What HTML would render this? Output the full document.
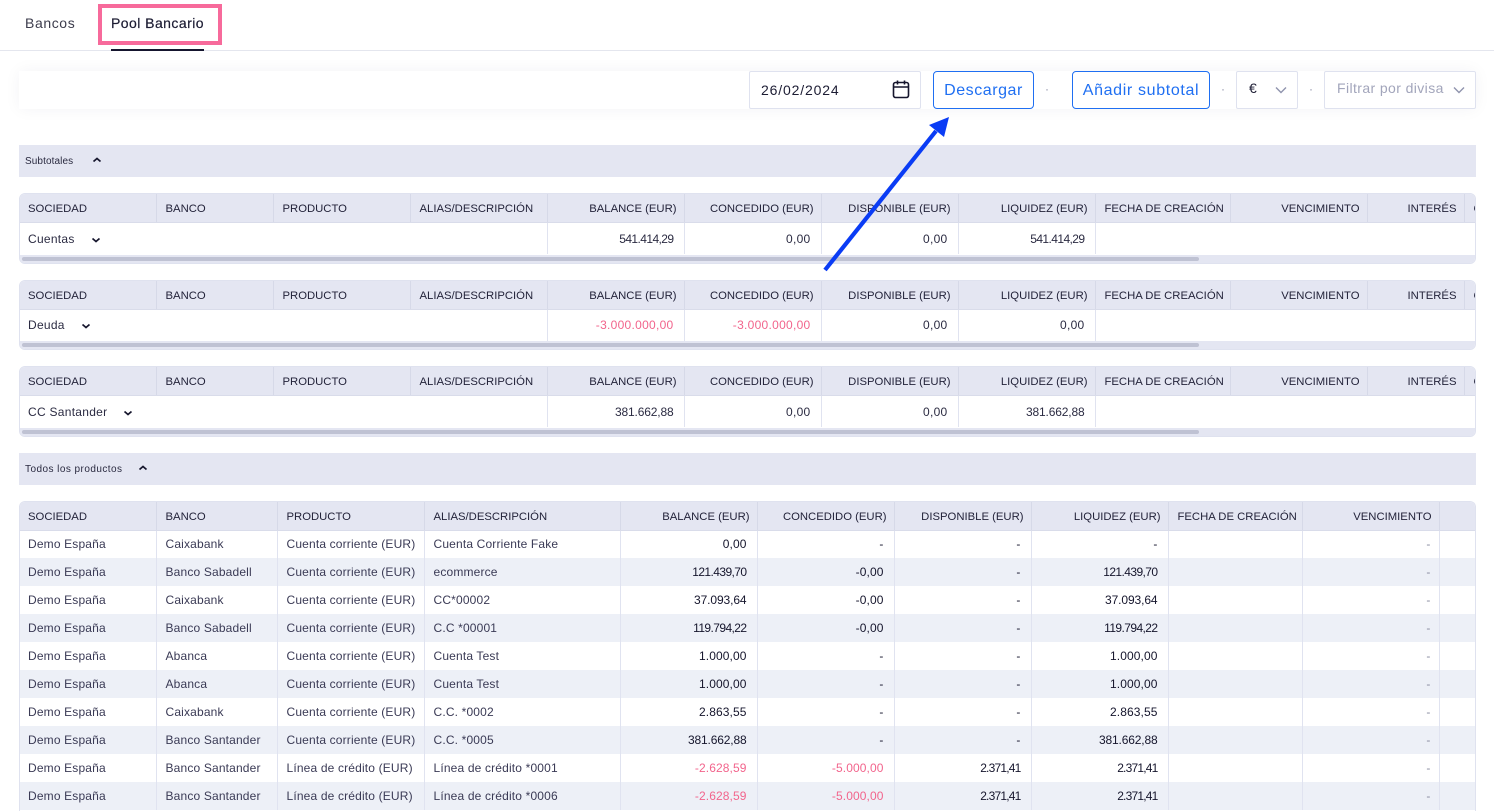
<!DOCTYPE html>
<html lang="es"><head><meta charset="utf-8"><title>Pool Bancario</title>
<style>
*{box-sizing:border-box}
html,body{margin:0;padding:0;width:1494px;height:811px;overflow:hidden;background:#fff;font-family:"Liberation Sans",sans-serif;color:#1c1c33}
.a{position:absolute}
.t{white-space:nowrap}
.box{position:absolute;border:1px solid #dfe2ef;background:#fff;top:71px;height:38px;border-radius:2px}
.btn{border-color:#1f6ff2;color:#1f6ff2;border-radius:4px;font-size:16px;text-align:center;line-height:37px}
.dot{position:absolute;top:82px;font-size:12px;color:#8e90a8}
.bar{position:absolute;left:19px;width:1457px;height:32px;background:#e4e6f2;font-size:10px;line-height:33px;padding-left:6px;color:#2a2a40}
.wrap{position:absolute;left:19px;width:1457px;border:1px solid #dfe2ef;border-radius:6px;overflow:hidden;background:#fff}
table{border-collapse:collapse;table-layout:fixed;position:absolute;left:0;top:0}
th,td{padding:0 8px 0 9px;font-weight:400;font-size:12px;white-space:nowrap;overflow:hidden;text-align:left;border-right:1px solid #e0e3f0;letter-spacing:.18px}
th:first-child,td:first-child{padding-left:8px}
th{height:28px;background:#e4e6f2;border-bottom:1px solid #d9dcea;border-right:1px solid #d6d9e8;color:#23233a;font-size:11.3px;letter-spacing:0;padding-top:2px}
td.r{text-align:right;padding-right:10px;color:#15152c}
th.r{text-align:right;padding-right:7px}
.s td{height:32px;color:#2b2b42;padding-top:1px;letter-spacing:.28px}
.s.u td{padding-top:0}
.s td.n{border-right:0}
.scroll{position:absolute;left:0;right:0;bottom:0;height:8px;background:#e4e6f2}
.thumb{position:absolute;left:2px;top:2px;width:1177px;height:4px;background:#bfc2d3;border-radius:2px}
.red{color:#f2648c!important}
.b td{height:28px;color:#3a3a55;letter-spacing:.16px}
.b tr:nth-child(odd) td{background:#edf0f7}
.b tr:first-child th{background:#e4e6f2}
.b td.r{color:#15152c;letter-spacing:.1px}
.b td.g{color:#8a8ca0;padding-right:8px}
.b td.red{color:#f2648c}
.k1{letter-spacing:-.58px!important}
.k2{letter-spacing:-.8px!important}
.k3{letter-spacing:-.15px!important}
.k4{letter-spacing:-.1px!important}
svg{position:absolute;overflow:visible}
</style></head><body>

<div class="a t" style="left:25px;top:15px;font-size:14px;letter-spacing:.6px;line-height:17px;color:#3c3c4c">Bancos</div>
<div class="a t" style="left:111px;top:15px;font-size:14px;letter-spacing:.45px;line-height:17px;color:#1c1c33;-webkit-text-stroke:.2px #1c1c33">Pool Bancario</div>
<div class="a" style="left:0;top:50px;width:1494px;height:1px;background:#e4e6ee"></div>
<div class="a" style="left:111px;top:49px;width:93px;height:2px;background:#15152e"></div>
<div class="a" style="left:98px;top:4px;width:124px;height:41px;border:4px solid #f76a9b"></div>

<div class="a" style="left:19px;top:71px;width:1457px;height:38px;background:#fff;box-shadow:0 0 16px rgba(30,30,70,.05)"></div>
<div class="box t" style="left:749px;width:172px;font-size:14px;line-height:36px;padding-left:11px;letter-spacing:.85px">26/02/2024</div>
<svg style="left:892px;top:80px" width="18" height="19" viewBox="0 0 18 19" fill="none" stroke="#15152c" stroke-width="1.6"><rect x="1.5" y="2.5" width="15" height="15" rx="2"/><path d="M1.5 7h15M5.5 .5v4M12.500 .5v4"/></svg>
<div class="box btn t" style="left:933px;width:101px;letter-spacing:.55px">Descargar</div>
<div class="dot" style="left:1045px">·</div>
<div class="box btn t" style="left:1072px;width:138px;letter-spacing:.65px">Añadir subtotal</div>
<div class="dot" style="left:1221px">·</div>
<div class="box t" style="left:1236px;width:62px;font-size:14px;line-height:32px;padding-left:12px">€</div>
<svg style="left:1275px;top:86px" width="12" height="8" fill="none" stroke="#8f93ad" stroke-width="1.4"><path d="M1 1.500l5 5 5-5"/></svg>
<div class="dot" style="left:1309px">·</div>
<div class="box t" style="left:1324px;width:152px;font-size:14px;letter-spacing:.4px;line-height:32px;padding-left:12px;color:#a2a5bb">Filtrar por divisa</div>
<svg style="left:1453px;top:86px" width="12" height="8" fill="none" stroke="#8f93ad" stroke-width="1.4"><path d="M1 1.500l5 5 5-5"/></svg>

<div class="bar t" style="top:145px;letter-spacing:.1px">Subtotales</div>
<svg style="left:92px;top:157px" width="10" height="6" fill="none" stroke="#15152c" stroke-width="1.7"><path d="M1.500 4.500L5 1.500l3.500 3"/></svg>

<div class="wrap" style="top:193px;height:71px">
<table style="width:1455px"><colgroup><col style="width:136px"><col style="width:117px"><col style="width:137px"><col style="width:137px"><col style="width:137px"><col style="width:137px"><col style="width:137px"><col style="width:137px"><col style="width:135px"><col style="width:137px"><col style="width:97px"><col style="width:12px"></colgroup>
<tr><th>SOCIEDAD</th><th>BANCO</th><th>PRODUCTO</th><th>ALIAS/DESCRIPCIÓN</th><th class="r">BALANCE (EUR)</th><th class="r">CONCEDIDO (EUR)</th><th class="r">DISPONIBLE (EUR)</th><th class="r">LIQUIDEZ (EUR)</th><th>FECHA DE CREACIÓN</th><th class="r">VENCIMIENTO</th><th class="r">INTERÉS</th><th>C</th></tr>
<tr class="s"><td class="n" colspan="4">Cuentas</td><td class="r k1" style="border-left:1px solid #e0e3f0">541.414,29</td><td class="r">0,00</td><td class="r">0,00</td><td class="r k1">541.414,29</td><td colspan="4" style="border:0"></td></tr></table>
<div class="scroll"><div class="thumb"></div></div></div>
<svg style="left:91px;top:237px" width="10" height="6" fill="none" stroke="#15152c" stroke-width="1.7"><path d="M1.500 1.500L5 4.500l3.500-3"/></svg>

<div class="wrap" style="top:280px;height:70px">
<table style="width:1455px"><colgroup><col style="width:136px"><col style="width:117px"><col style="width:137px"><col style="width:137px"><col style="width:137px"><col style="width:137px"><col style="width:137px"><col style="width:137px"><col style="width:135px"><col style="width:137px"><col style="width:97px"><col style="width:12px"></colgroup>
<tr><th>SOCIEDAD</th><th>BANCO</th><th>PRODUCTO</th><th>ALIAS/DESCRIPCIÓN</th><th class="r">BALANCE (EUR)</th><th class="r">CONCEDIDO (EUR)</th><th class="r">DISPONIBLE (EUR)</th><th class="r">LIQUIDEZ (EUR)</th><th>FECHA DE CREACIÓN</th><th class="r">VENCIMIENTO</th><th class="r">INTERÉS</th><th>C</th></tr>
<tr class="s u"><td class="n" colspan="4">Deuda</td><td class="r red" style="border-left:1px solid #e0e3f0">-3.000.000,00</td><td class="r red">-3.000.000,00</td><td class="r">0,00</td><td class="r">0,00</td><td colspan="4" style="border:0"></td></tr></table>
<div class="scroll"><div class="thumb"></div></div></div>
<svg style="left:81px;top:323px" width="10" height="6" fill="none" stroke="#15152c" stroke-width="1.7"><path d="M1.500 1.500L5 4.500l3.500-3"/></svg>

<div class="wrap" style="top:366px;height:71px">
<table style="width:1455px"><colgroup><col style="width:136px"><col style="width:117px"><col style="width:137px"><col style="width:137px"><col style="width:137px"><col style="width:137px"><col style="width:137px"><col style="width:137px"><col style="width:135px"><col style="width:137px"><col style="width:97px"><col style="width:12px"></colgroup>
<tr><th>SOCIEDAD</th><th>BANCO</th><th>PRODUCTO</th><th>ALIAS/DESCRIPCIÓN</th><th class="r">BALANCE (EUR)</th><th class="r">CONCEDIDO (EUR)</th><th class="r">DISPONIBLE (EUR)</th><th class="r">LIQUIDEZ (EUR)</th><th>FECHA DE CREACIÓN</th><th class="r">VENCIMIENTO</th><th class="r">INTERÉS</th><th>C</th></tr>
<tr class="s"><td class="n" colspan="4">CC Santander</td><td class="r k3" style="border-left:1px solid #e0e3f0">381.662,88</td><td class="r">0,00</td><td class="r">0,00</td><td class="r k3">381.662,88</td><td colspan="4" style="border:0"></td></tr></table>
<div class="scroll"><div class="thumb"></div></div></div>
<svg style="left:123px;top:410px" width="10" height="6" fill="none" stroke="#15152c" stroke-width="1.7"><path d="M1.500 1.500L5 4.500l3.500-3"/></svg>

<div class="bar t" style="top:453px;letter-spacing:.45px">Todos los productos</div>
<svg style="left:138px;top:465px" width="10" height="6" fill="none" stroke="#15152c" stroke-width="1.7"><path d="M1.500 4.500L5 1.500l3.500 3"/></svg>

<div class="wrap" style="top:501px;height:310px;border-bottom:0;border-radius:6px 6px 0 0">
<table class="b" style="width:1455px"><colgroup><col style="width:136px"><col style="width:121px"><col style="width:147px"><col style="width:196px"><col style="width:137px"><col style="width:137px"><col style="width:137px"><col style="width:137px"><col style="width:134px"><col style="width:137px"><col style="width:36px"></colgroup>
<tr><th>SOCIEDAD</th><th>BANCO</th><th>PRODUCTO</th><th>ALIAS/DESCRIPCIÓN</th><th class="r">BALANCE (EUR)</th><th class="r">CONCEDIDO (EUR)</th><th class="r">DISPONIBLE (EUR)</th><th class="r">LIQUIDEZ (EUR)</th><th>FECHA DE CREACIÓN</th><th class="r">VENCIMIENTO</th><th></th></tr>
<tr><td>Demo España</td><td>Caixabank</td><td>Cuenta corriente (EUR)</td><td>Cuenta Corriente Fake</td><td class="r">0,00</td><td class="r">-</td><td class="r">-</td><td class="r">-</td><td></td><td class="r g">-</td><td></td></tr>
<tr><td>Demo España</td><td>Banco Sabadell</td><td>Cuenta corriente (EUR)</td><td>ecommerce</td><td class="r k1">121.439,70</td><td class="r">-0,00</td><td class="r">-</td><td class="r k1">121.439,70</td><td></td><td class="r g">-</td><td></td></tr>
<tr><td>Demo España</td><td>Caixabank</td><td>Cuenta corriente (EUR)</td><td>CC*00002</td><td class="r k4">37.093,64</td><td class="r">-0,00</td><td class="r">-</td><td class="r k4">37.093,64</td><td></td><td class="r g">-</td><td></td></tr>
<tr><td>Demo España</td><td>Banco Sabadell</td><td>Cuenta corriente (EUR)</td><td>C.C *00001</td><td class="r k1">119.794,22</td><td class="r">-0,00</td><td class="r">-</td><td class="r k1">119.794,22</td><td></td><td class="r g">-</td><td></td></tr>
<tr><td>Demo España</td><td>Abanca</td><td>Cuenta corriente (EUR)</td><td>Cuenta Test</td><td class="r">1.000,00</td><td class="r">-</td><td class="r">-</td><td class="r">1.000,00</td><td></td><td class="r g">-</td><td></td></tr>
<tr><td>Demo España</td><td>Abanca</td><td>Cuenta corriente (EUR)</td><td>Cuenta Test</td><td class="r">1.000,00</td><td class="r">-</td><td class="r">-</td><td class="r">1.000,00</td><td></td><td class="r g">-</td><td></td></tr>
<tr><td>Demo España</td><td>Caixabank</td><td>Cuenta corriente (EUR)</td><td>C.C. *0002</td><td class="r">2.863,55</td><td class="r">-</td><td class="r">-</td><td class="r">2.863,55</td><td></td><td class="r g">-</td><td></td></tr>
<tr><td>Demo España</td><td>Banco Santander</td><td>Cuenta corriente (EUR)</td><td>C.C. *0005</td><td class="r k3">381.662,88</td><td class="r">-</td><td class="r">-</td><td class="r k3">381.662,88</td><td></td><td class="r g">-</td><td></td></tr>
<tr><td>Demo España</td><td>Banco Santander</td><td>Línea de crédito (EUR)</td><td>Línea de crédito *0001</td><td class="r red">-2.628,59</td><td class="r red">-5.000,00</td><td class="r k2">2.371,41</td><td class="r k2">2.371,41</td><td></td><td class="r g">-</td><td></td></tr>
<tr><td>Demo España</td><td>Banco Santander</td><td>Línea de crédito (EUR)</td><td>Línea de crédito *0006</td><td class="r red">-2.628,59</td><td class="r red">-5.000,00</td><td class="r k2">2.371,41</td><td class="r k2">2.371,41</td><td></td><td class="r g">-</td><td></td></tr>
</table></div>

<svg style="left:0;top:0" width="1494" height="811"><path d="M825 270L936 131" stroke="#0a3cf5" stroke-width="4.2" fill="none"/><path d="M949 117L929 125L944 137Z" fill="#0a3cf5"/></svg>
</body></html>
